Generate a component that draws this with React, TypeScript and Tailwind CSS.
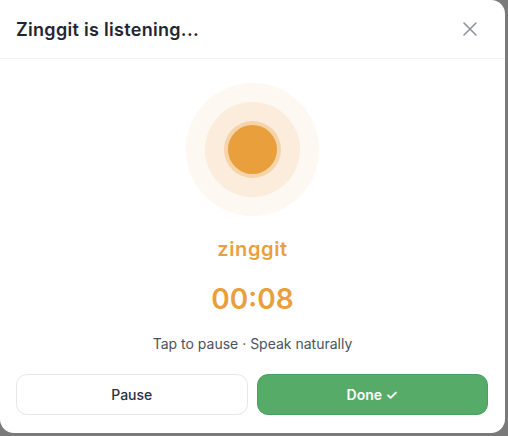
import React from "react";

export default function App() {
  return (
    <div className="w-[508px] h-[436px] bg-[#7a7a7a] overflow-hidden" style={{ fontFamily: "Inter, 'Noto Sans', sans-serif" }}>
      <div className="w-[505px] h-[433px] bg-white rounded-r-[14px] rounded-bl-[14px] flex flex-col">
        <div className="h-[59px] flex items-center justify-between pl-4 pr-[28px] border-b border-[#f1f1f3]">
          <h1 className="text-[18px] font-semibold text-[#1f2633] tracking-[0.3px]">Zinggit is listening...</h1>
          <svg width="14" height="14" viewBox="0 0 14 14" className="text-[#8a8f98]">
            <path d="M1 1 L13 13 M13 1 L1 13" stroke="currentColor" strokeWidth="1.5" strokeLinecap="round" />
          </svg>
        </div>
        <div className="flex flex-col items-center pt-[24px]">
          <div className="w-[133px] h-[133px] rounded-full bg-[#fef8f2] flex items-center justify-center">
            <div className="w-[95px] h-[95px] rounded-full bg-[#fcecdc] flex items-center justify-center">
              <div className="w-[57px] h-[57px] rounded-full bg-[#f6d4aa] flex items-center justify-center">
                <div className="w-[49px] h-[49px] rounded-full bg-[#e99f3c]" />
              </div>
            </div>
          </div>
          <div className="mt-[19px] text-[20px] font-semibold text-[#e99f3c] leading-[28px] tracking-[0.6px]">zinggit</div>
          <div className="mt-[18px] text-[28px] font-semibold text-[#e99f3c] leading-[36px]">00:08</div>
          <div className="mt-[17px] text-[14px] text-[#4b5260] leading-[20px]">Tap to pause · Speak naturally</div>
        </div>
        <div className="flex gap-[9px] pl-4 pr-[17px] mt-[20px]">
          <button className="flex-1 h-[41px] rounded-[11px] border border-[#e6e7ea] bg-white text-[14px] font-medium text-[#2a3140]">Pause</button>
          <button className="flex-1 h-[41px] rounded-[11px] border border-[#4aa05c] bg-[#56ab68] text-[14px] font-semibold text-white">Done ✓</button>
        </div>
      </div>
    </div>
  );
}
